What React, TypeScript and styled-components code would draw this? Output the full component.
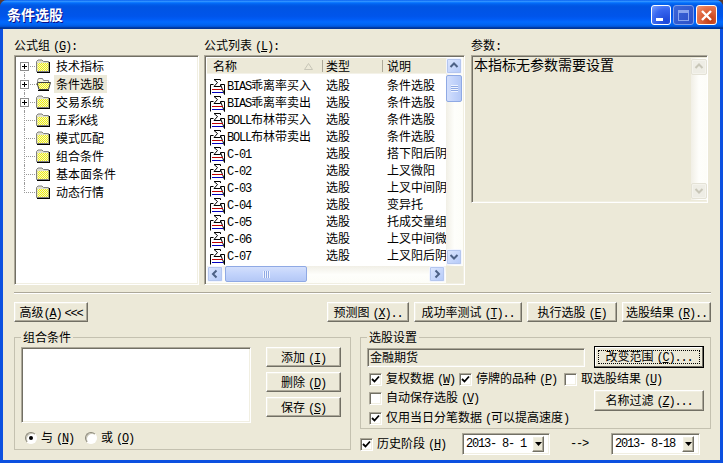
import React from "react";
import styled, { createGlobalStyle, css } from "styled-components";

const Global = createGlobalStyle`
  html, body { margin: 0; padding: 0; background: #5a3a30; overflow: hidden; }
  * { box-sizing: border-box; }
`;

const sunken = css`
  border: 1px solid;
  border-color: #aca899 #fff #fff #aca899;
  box-shadow: inset 1px 1px 0 #716f64, inset -1px -1px 0 #f1efe2;
`;
const raised = css`
  background: #ece9d8;
  border: 1px solid;
  border-color: #fff #716f64 #716f64 #fff;
  box-shadow: inset -1px -1px 0 #aca899, inset 1px 1px 0 #f1efe2;
`;
const latinFont = css`
  font: 12px "Liberation Mono", monospace;
  letter-spacing: -1.2px;
`;

const Window = styled.div`
  width: 723px;
  height: 463px;
  display: flex;
  flex-direction: column;
  background: #0c50e0;
  border-radius: 7px 7px 0 0;
  overflow: hidden;
  font: 12px "Noto Sans CJK SC", "Liberation Sans", sans-serif;
  color: #000;
`;
const TitleBar = styled.div`
  height: 29px;
  flex: none;
  display: flex;
  align-items: center;
  padding: 1px 6px 0 7px;
  background: linear-gradient(180deg, #0058ee 0, #3593ff 4%, #288eff 6%, #127dff 8%, #036ffc 10%, #0262ee 14%, #0057e5 20%, #0054e3 24%, #0055eb 56%, #005bf5 66%, #026afe 76%, #0062ef 86%, #0052d6 92%, #0040ab 94%, #003092 100%);
`;
const Title = styled.div`
  flex: 1;
  font-size: 14px;
  font-weight: 700;
  color: #fff;
  text-shadow: 1px 1px 0 #0f1089;
  margin-bottom: 2px;
`;
const WinControls = styled.div`
  display: flex;
  gap: 2px;
`;
const WinBtn = styled.div<{ $kind: "min" | "max" | "close" }>`
  width: ${(p) => (p.$kind === "min" ? 20 : 21)}px;
  height: 20px;
  border-radius: 3px;
  border: 1px solid ${(p) => (p.$kind === "max" ? "#7f9fe8" : "#fff")};
  display: flex;
  align-items: center;
  justify-content: center;
  background: ${(p) =>
    p.$kind === "close"
      ? "radial-gradient(circle at 70% 80%, #c23a12, #e8764f 70%, #f09a7a)"
      : p.$kind === "max"
      ? "linear-gradient(135deg, #3c66d8, #2a50c8)"
      : "radial-gradient(circle at 80% 85%, #1a45d8, #3a68f0 60%, #7aa0ff)"};
`;

const Client = styled.div`
  flex: 1;
  margin: 0 3px 3px;
  padding: 11px 9px 0 11px;
  background: #ece9d8;
`;

const TopGrid = styled.div`
  display: grid;
  grid-template-columns: 185px 261px 238px;
  column-gap: 5px;
  align-items: start;
`;
const Column = styled.div<{ $offset?: number }>`
  margin-left: ${(p) => p.$offset ?? 0}px;
`;
const FieldLabel = styled.div`
  height: 15px;
  line-height: 10px;
  white-space: nowrap;
`;
const LatinRun = styled.span`
  ${latinFont};
  word-spacing: -3px;
`;
const Mnemonic = styled.span`
  text-decoration: underline;
`;

function T({ children }: { children: string }) {
  const parts = children.split(/([\x00-\x7f]+)/).filter(Boolean);
  return (
    <>
      {parts.map((part, i) => {
        if (!/^[\x00-\x7f]+$/.test(part)) return <span key={i}>{part}</span>;
        const m = part.match(/^(.*\()([A-Z])(\).*)$/);
        return (
          <LatinRun key={i}>
            {m ? (
              <>
                {m[1]}
                <Mnemonic>{m[2]}</Mnemonic>
                {m[3]}
              </>
            ) : (
              part
            )}
          </LatinRun>
        );
      })}
    </>
  );
}

/* tree */
const TreeBox = styled.div`
  ${sunken};
  height: 230px;
  background: #fff;
  padding: 1px;
`;
const TreeRow = styled.div<{ $first?: boolean; $last?: boolean }>`
  position: relative;
  height: 18px;
  display: flex;
  align-items: center;
  gap: 3px;
  padding-left: 20px;
  &::before {
    content: "";
    position: absolute;
    left: 8px;
    top: ${(p) => (p.$first ? "9px" : "0")};
    bottom: ${(p) => (p.$last ? "8px" : "0")};
    border-left: 1px dotted #999;
  }
  &::after {
    content: "";
    position: absolute;
    left: 8px;
    width: 13px;
    top: 9px;
    border-top: 1px dotted #999;
  }
`;
const Expander = styled.div`
  position: absolute;
  z-index: 1;
  left: 4px;
  top: 5px;
  width: 9px;
  height: 9px;
  background: #fff;
  border: 1px solid #8c8c8c;
  display: flex;
  align-items: center;
  justify-content: center;
  svg { display: block; }
`;
const TreeLabel = styled.div<{ $selected?: boolean }>`
  height: 18px;
  line-height: 17px;
  padding: 0 3px 0 2px;
  background: ${(p) => (p.$selected ? "#ece9d8" : "transparent")};
  white-space: nowrap;
`;

const Dither = () => (
  <defs>
    <pattern id="dither" width="2" height="2" patternUnits="userSpaceOnUse">
      <rect width="2" height="2" fill="#f6f600" />
      <rect width="1" height="1" fill="#eeeed8" />
      <rect x="1" y="1" width="1" height="1" fill="#eeeed8" />
    </pattern>
  </defs>
);

const Folder = ({ open }: { open?: boolean }) => (
  <svg width="15" height="14" viewBox="0 0 15 14" style={{ position: "relative", zIndex: 1 }}>
    <Dither />
    {open ? (
      <>
        <path d="M1.5 3.5 L2.5 1.5 H6.5 L7.5 3.5 H12.5 V12.5 H3 Z" fill="#f4f4e8" stroke="#808080" />
        <path d="M3 5.5 H14.5 L12.5 12.5 H3 L1 6 Z" fill="url(#dither)" stroke="#404040" />
        <path d="M13 13.5 H2" stroke="#000" />
      </>
    ) : (
      <>
        <path d="M0.5 12.5 V2.5 L2 1 H6 L7.5 2.5 H12.5 V12.5 Z" fill="#e0e0d0" stroke="#808080" />
        <rect x="1.5" y="4" width="11" height="8" fill="url(#dither)" />
        <path d="M1 13.5 H14 M13.5 3 V14" stroke="#000" />
      </>
    )}
  </svg>
);

const Plus = () => (
  <svg width="7" height="7" viewBox="0 0 7 7">
    <path d="M1 3.5H6M3.5 1V6" stroke="#000" />
  </svg>
);

const treeItems = ["技术指标", "条件选股", "交易系统", "五彩K线", "模式匹配", "组合条件", "基本面条件", "动态行情"];

/* list */
const ListBox = styled.div`
  ${sunken};
  height: 230px;
  padding: 2px 1px 1px 2px;
  background: #fff;
  display: grid;
  grid-template-columns: 239px 17px;
  grid-template-rows: 208px 17px;
`;
const ListMain = styled.div`
  display: flex;
  flex-direction: column;
  overflow: hidden;
`;
const ListHeader = styled.div`
  height: 16px;
  flex: none;
  background: #ece9d8;
  border-bottom: 1px solid #f4f2e8;
  display: grid;
  grid-template-columns: 115px 60px 64px;
  align-items: center;
`;
const HeaderCell = styled.div<{ $pad: number }>`
  position: relative;
  height: 12px;
  line-height: 12px;
  padding-left: ${(p) => p.$pad}px;
  border-left: ${(p) => (p.$pad < 6 ? "1px solid #aca899" : "none")};
  svg { position: absolute; right: 9px; top: 3px; }
`;
const Rows = styled.div`
  flex: 1;
  overflow: hidden;
  background: #fff;
`;
const Row = styled.div`
  height: 17px;
  display: grid;
  grid-template-columns: 115px 60px 64px;
  align-items: center;
  white-space: nowrap;
`;
const NameCell = styled.div`
  display: flex;
  align-items: center;
  gap: 2px;
  padding-left: 3px;
  svg { margin-top: 5px; flex: none; }
`;
const Cell = styled.div<{ $pad: number }>`
  padding-left: ${(p) => p.$pad}px;
  overflow: hidden;
`;

const Formula = () => (
  <svg width="15" height="16" viewBox="0 0 15 16">
    <path d="M0.5 15.5 V5.5 H3.5 M10.5 5.5 H14.5 V15.5 Z" fill="#fff" stroke="#000" />
    <path d="M4 0.5 H10.5 V2 M4 0.5 L7.5 3.5 L4 7.5 H10.5 V6" fill="none" stroke="#000" />
    <path d="M2 10.5 H13" stroke="#c00000" />
    <path d="M2 13.5 H13" stroke="#0000c0" />
  </svg>
);

const listRows: [string, string][] = [
  ["BIAS乖离率买入", "条件选股"],
  ["BIAS乖离率卖出", "条件选股"],
  ["BOLL布林带买入", "条件选股"],
  ["BOLL布林带卖出", "条件选股"],
  ["C-01", "搭下阳后阴"],
  ["C-02", "上叉微阳"],
  ["C-03", "上叉中间阴"],
  ["C-04", "变异托"],
  ["C-05", "托成交量组"],
  ["C-06", "上叉中间微"],
  ["C-07", "上叉阳后阴"],
];

/* scrollbars */
const VTrack = styled.div`
  display: flex;
  flex-direction: column;
  padding-bottom: 1px;
  background: linear-gradient(90deg, #f1efe6, #fefefb 50%, #fdfdf8);
`;
const HTrack = styled.div`
  display: flex;
  padding-right: 1px;
  background: linear-gradient(180deg, #f1efe6, #fefefb 50%, #fdfdf8);
`;
const Corner = styled.div`
  background: #ece9d8;
`;
const ScrollBtn = styled.div<{ $off?: boolean }>`
  width: 16px;
  height: 16px;
  flex: none;
  border-radius: 2px;
  border: 1px solid ${(p) => (p.$off ? "#e4e2d6" : "#f2f5fe")};
  outline: 1px solid ${(p) => (p.$off ? "#f4f3ec" : "#b4c6ee")};
  outline-offset: -2px;
  background: ${(p) => (p.$off ? "#eeede5" : "linear-gradient(135deg, #dde7fe, #b4c9f8)")};
  display: flex;
  align-items: center;
  justify-content: center;
`;
const VThumb = styled.div`
  width: 16px;
  height: 27px;
  margin-top: 1px;
  border: 1px solid #8fa9e4;
  border-radius: 2px;
  background: linear-gradient(90deg, #d3dffc, #c2d3fb 50%, #b4c8f6);
  display: flex;
  align-items: center;
  justify-content: center;
`;
const HThumb = styled.div`
  width: 82px;
  height: 16px;
  margin-left: 2px;
  border: 1px solid #8fa9e4;
  border-radius: 2px;
  background: linear-gradient(180deg, #d3dffc, #c2d3fb 50%, #b4c8f6);
  display: flex;
  align-items: center;
  justify-content: center;
`;
const Spacer = styled.div`
  flex: 1;
`;

const Chevron = ({ dir, off }: { dir: "up" | "down" | "left" | "right"; off?: boolean }) => {
  const d = {
    up: "M1.5 6 L5 2.5 L8.5 6",
    down: "M1.5 3 L5 6.5 L8.5 3",
    left: "M6.5 1.5 L3 5 L6.5 8.5",
    right: "M3.5 1.5 L7 5 L3.5 8.5",
  }[dir];
  return (
    <svg width="10" height="10" viewBox="0 0 10 10">
      <path d={d} fill="none" stroke={off ? "#c8c6b8" : "#4d6185"} strokeWidth="2" />
    </svg>
  );
};
const GripV = () => (
  <svg width="7" height="7" viewBox="0 0 7 7">
    <path d="M0 0.5H7M0 2.5H7M0 4.5H7M0 6.5H7" stroke="#eef3fe" />
    <path d="M0 1.5H7M0 3.5H7M0 5.5H7" stroke="#8fa9e4" />
  </svg>
);
const GripH = () => (
  <svg width="7" height="7" viewBox="0 0 7 7">
    <path d="M0.5 0V7M2.5 0V7M4.5 0V7M6.5 0V7" stroke="#eef3fe" />
    <path d="M1.5 0V7M3.5 0V7M5.5 0V7" stroke="#8fa9e4" />
  </svg>
);

/* params */
const ParamBox = styled.div`
  ${sunken};
  height: 148px;
  padding: 2px 0 2px 2px;
  background: #ece9d8;
  display: flex;
`;
const ParamText = styled.div`
  flex: 1;
  font-size: 14px;
  line-height: 14px;
  margin-top: -1px;
`;
const ParamScroll = styled.div`
  width: 16px;
  display: flex;
  flex-direction: column;
  padding: 1px 0;
  background: linear-gradient(90deg, #f1efe6, #fefefb 50%, #fdfdf8);
`;

/* lower */
const Divider = styled.div`
  height: 2px;
  margin-top: 7px;
  border-top: 1px solid #aca899;
  border-bottom: 1px solid #fff;
`;
const ActionRow = styled.div`
  display: flex;
  margin-top: 8px;
  gap: 5px;
`;
const Button = styled.button<{ $w: number; $h?: number; $default?: boolean }>`
  ${raised};
  width: ${(p) => p.$w}px;
  height: ${(p) => p.$h ?? 20}px;
  flex: none;
  padding: 0 0 3px;
  font: inherit;
  color: #000;
  white-space: nowrap;
  position: relative;
  ${(p) =>
    p.$default &&
    css`
      border: 1px solid #000;
      box-shadow: inset -1px -1px 0 #716f64, inset 1px 1px 0 #fff;
      &::after {
        content: "";
        position: absolute;
        inset: 3px;
        border: 1px dotted #000;
      }
    `}
`;
const LowerGrid = styled.div`
  display: grid;
  grid-template-columns: 337px 351px;
  column-gap: 9px;
  margin-top: 8px;
  align-items: start;
`;
const Group = styled.fieldset<{ $pb: number; $pr: number }>`
  margin: 0;
  border: 1px solid #c4c1b0;
  padding: 3px ${(p) => p.$pr}px ${(p) => p.$pb}px 6px;
  min-width: 0;
`;
const Legend = styled.legend`
  padding: 0 2px;
  height: 14px;
  line-height: 13px;
`;
const ComboRow = styled.div`
  display: flex;
  gap: 15px;
`;
const ListArea = styled.div`
  ${sunken};
  width: 230px;
  height: 76px;
  background: #fff;
`;
const ButtonStack = styled.div`
  display: flex;
  flex-direction: column;
  gap: 5px;
`;
const RadioRow = styled.div`
  display: flex;
  margin-top: 7px;
  height: 16px;
  padding-left: 4px;
`;
const RadioItem = styled.div`
  width: 60px;
  display: flex;
  align-items: center;
  gap: 4px;
  & > span { margin-bottom: 3px; }
`;
const RadioDot = styled.div<{ $on?: boolean }>`
  width: 12px;
  height: 12px;
  border-radius: 50%;
  background: #fff;
  border: 1px solid;
  border-color: #8a8778 #fff #fff #8a8778;
  box-shadow: inset 1px 1px 0 #c8c6b8;
  display: flex;
  align-items: center;
  justify-content: center;
  &::after {
    content: "";
    width: 4px;
    height: 4px;
    border-radius: 50%;
    background: ${(p) => (p.$on ? "#000" : "transparent")};
  }
`;

const RightCol = styled.div`
  display: flex;
  flex-direction: column;
`;
const RangeRow = styled.div`
  display: flex;
  align-items: center;
  gap: 9px;
  margin-top: -1px;
`;
const RangeField = styled.div`
  ${sunken};
  width: 218px;
  flex: none;
  height: 19px;
  line-height: 13px;
  padding: 1px 2px;
  background: #ece9d8;
`;
const CheckRow = styled.div`
  display: flex;
  height: 16px;
  margin-top: 3px;
  padding-left: 2px;
`;
const CheckItem = styled.div<{ $w?: number }>`
  display: flex;
  align-items: center;
  gap: 4px;
  width: ${(p) => (p.$w ? `${p.$w}px` : "auto")};
  white-space: nowrap;
  & > span { margin-bottom: 3px; }
`;
const Box = styled.div`
  ${sunken};
  width: 13px;
  height: 13px;
  flex: none;
  background: #fff;
  display: flex;
  align-items: center;
  justify-content: center;
`;
const SplitRow = styled.div`
  display: flex;
  margin-top: 3px;
`;
const SplitChecks = styled.div`
  width: 227px;
  flex: none;
  display: flex;
  flex-direction: column;
  gap: 4px;
  padding-left: 2px;
`;
const SplitLine = styled.div`
  height: 16px;
  display: flex;
`;
const HistoryRow = styled.div`
  display: flex;
  align-items: center;
  height: 22px;
  margin-top: 4px;
`;
const DateCombo = styled.div<{ $w: number; $ml: number }>`
  ${sunken};
  width: ${(p) => p.$w}px;
  height: 22px;
  margin-left: ${(p) => p.$ml}px;
  background: #fff;
  display: flex;
  align-items: center;
  justify-content: space-between;
  padding: 2px 5px 2px 3px;
`;
const DateText = styled.span`
  ${latinFont};
  white-space: pre;
`;
const DropBtn = styled.div`
  ${raised};
  width: 12px;
  height: 16px;
  display: flex;
  align-items: center;
  justify-content: center;
`;
const Arrow = styled.span`
  ${latinFont};
  white-space: pre;
  margin-left: 20px;
  width: 21px;
`;

const Check = () => (
  <svg width="9" height="9" viewBox="0 0 9 9">
    <path d="M1 4 L3.5 6.5 L8 1.5" fill="none" stroke="#000" strokeWidth="1.8" />
  </svg>
);
const CheckBox = ({ on }: { on?: boolean }) => <Box>{on && <Check />}</Box>;
const Tri = () => (
  <svg width="7" height="4" viewBox="0 0 7 4">
    <path d="M0 0H7L3.5 4Z" fill="#000" />
  </svg>
);

export default function App() {
  return (
    <>
      <Global />
      <Window>
        <TitleBar>
          <Title>条件选股</Title>
          <WinControls>
            <WinBtn $kind="min">
              <svg width="15" height="15" viewBox="0 0 15 15">
                <rect x="2" y="10" width="7" height="3" fill="#fff" />
              </svg>
            </WinBtn>
            <WinBtn $kind="max">
              <svg width="15" height="15" viewBox="0 0 15 15">
                <rect x="2.5" y="2.5" width="10" height="10" fill="none" stroke="#8aa6ee" />
                <rect x="2" y="2" width="11" height="3" fill="#8aa6ee" />
              </svg>
            </WinBtn>
            <WinBtn $kind="close">
              <svg width="15" height="15" viewBox="0 0 15 15">
                <path d="M3 3L12 12M12 3L3 12" stroke="#fff" strokeWidth="2.4" />
              </svg>
            </WinBtn>
          </WinControls>
        </TitleBar>
        <Client>
          <TopGrid>
            <Column>
              <FieldLabel>
                <T>{"公式组 (G):"}</T>
              </FieldLabel>
              <TreeBox>
                {treeItems.map((item, i) => (
                  <TreeRow key={item} $first={i === 0} $last={i === treeItems.length - 1}>
                    {i < 3 && (
                      <Expander>
                        <Plus />
                      </Expander>
                    )}
                    <Folder open={i === 1} />
                    <TreeLabel $selected={i === 1}>
                      <T>{item}</T>
                    </TreeLabel>
                  </TreeRow>
                ))}
              </TreeBox>
            </Column>
            <Column>
              <FieldLabel>
                <T>{"公式列表 (L):"}</T>
              </FieldLabel>
              <ListBox>
                <ListMain>
                  <ListHeader>
                    <HeaderCell $pad={6}>
                      名称
                      <svg width="9" height="7" viewBox="0 0 9 7">
                        <path d="M0.5 6.5H8.5L4.5 0.5Z" fill="none" stroke="#c8c6b8" />
                      </svg>
                    </HeaderCell>
                    <HeaderCell $pad={3}>类型</HeaderCell>
                    <HeaderCell $pad={4}>说明</HeaderCell>
                  </ListHeader>
                  <Rows>
                    {listRows.map(([name, desc]) => (
                      <Row key={name}>
                        <NameCell>
                          <Formula />
                          <span>
                            <T>{name}</T>
                          </span>
                        </NameCell>
                        <Cell $pad={4}>选股</Cell>
                        <Cell $pad={5}>{desc}</Cell>
                      </Row>
                    ))}
                    <Row>
                      <NameCell>
                        <Formula />
                      </NameCell>
                    </Row>
                  </Rows>
                </ListMain>
                <VTrack>
                  <ScrollBtn>
                    <Chevron dir="up" />
                  </ScrollBtn>
                  <VThumb>
                    <GripV />
                  </VThumb>
                  <Spacer />
                  <ScrollBtn>
                    <Chevron dir="down" />
                  </ScrollBtn>
                </VTrack>
                <HTrack>
                  <ScrollBtn>
                    <Chevron dir="left" />
                  </ScrollBtn>
                  <HThumb>
                    <GripH />
                  </HThumb>
                  <Spacer />
                  <ScrollBtn>
                    <Chevron dir="right" />
                  </ScrollBtn>
                </HTrack>
                <Corner />
              </ListBox>
            </Column>
            <Column $offset={1}>
              <FieldLabel>
                <T>{"参数:"}</T>
              </FieldLabel>
              <ParamBox>
                <ParamText>本指标无参数需要设置</ParamText>
                <ParamScroll>
                  <ScrollBtn $off>
                    <Chevron dir="up" off />
                  </ScrollBtn>
                  <Spacer />
                  <ScrollBtn $off>
                    <Chevron dir="down" off />
                  </ScrollBtn>
                </ParamScroll>
              </ParamBox>
            </Column>
          </TopGrid>
          <Divider />
          <ActionRow>
            <Button $w={74}>
              <T>{"高级(A) <<<"}</T>
            </Button>
            <Spacer />
            <Button $w={82}>
              <T>{"预测图 (X).."}</T>
            </Button>
            <Button $w={108}>
              <T>{"成功率测试 (T).."}</T>
            </Button>
            <Button $w={90}>
              <T>{"执行选股 (E)"}</T>
            </Button>
            <Button $w={89}>
              <T>{"选股结果 (R).."}</T>
            </Button>
          </ActionRow>
          <LowerGrid>
            <Group $pb={3} $pr={9}>
              <Legend>组合条件</Legend>
              <ComboRow>
                <ListArea />
                <ButtonStack>
                  <Button $w={75}>
                    <T>{"添加 (I)"}</T>
                  </Button>
                  <Button $w={75}>
                    <T>{"删除 (D)"}</T>
                  </Button>
                  <Button $w={75}>
                    <T>{"保存 (S)"}</T>
                  </Button>
                </ButtonStack>
              </ComboRow>
              <RadioRow>
                <RadioItem>
                  <RadioDot $on />
                  <span>
                    <T>{"与 (N)"}</T>
                  </span>
                </RadioItem>
                <RadioItem>
                  <RadioDot />
                  <span>
                    <T>{"或 (O)"}</T>
                  </span>
                </RadioItem>
              </RadioRow>
            </Group>
            <RightCol>
              <Group $pb={2} $pr={6}>
                <Legend>选股设置</Legend>
                <RangeRow>
                  <RangeField>金融期货</RangeField>
                  <Button $w={110} $h={22} $default>
                    <T>{"改变范围 (C)..."}</T>
                  </Button>
                </RangeRow>
                <CheckRow>
                  <CheckItem $w={90}>
                    <CheckBox on />
                    <span>
                      <T>{"复权数据 (W)"}</T>
                    </span>
                  </CheckItem>
                  <CheckItem $w={105}>
                    <CheckBox on />
                    <span>
                      <T>{"停牌的品种 (P)"}</T>
                    </span>
                  </CheckItem>
                  <CheckItem>
                    <CheckBox />
                    <span>
                      <T>{"取选股结果 (U)"}</T>
                    </span>
                  </CheckItem>
                </CheckRow>
                <SplitRow>
                  <SplitChecks>
                    <SplitLine>
                      <CheckItem>
                        <CheckBox />
                        <span>
                          <T>{"自动保存选股 (V)"}</T>
                        </span>
                      </CheckItem>
                    </SplitLine>
                    <SplitLine>
                      <CheckItem>
                        <CheckBox on />
                        <span>
                          <T>{"仅用当日分笔数据 (可以提高速度)"}</T>
                        </span>
                      </CheckItem>
                    </SplitLine>
                  </SplitChecks>
                  <Button $w={110} $h={21}>
                    <T>{"名称过滤 (Z)..."}</T>
                  </Button>
                </SplitRow>
              </Group>
              <HistoryRow>
                <CheckItem $w={102}>
                  <CheckBox on />
                  <span>
                    <T>{"历史阶段 (H)"}</T>
                  </span>
                </CheckItem>
                <DateCombo $w={88} $ml={0}>
                  <DateText>2013- 8- 1</DateText>
                  <DropBtn>
                    <Tri />
                  </DropBtn>
                </DateCombo>
                <Arrow>{"-->"}</Arrow>
                <DateCombo $w={89} $ml={20}>
                  <DateText>2013- 8-18</DateText>
                  <DropBtn>
                    <Tri />
                  </DropBtn>
                </DateCombo>
              </HistoryRow>
            </RightCol>
          </LowerGrid>
        </Client>
      </Window>
    </>
  );
}
